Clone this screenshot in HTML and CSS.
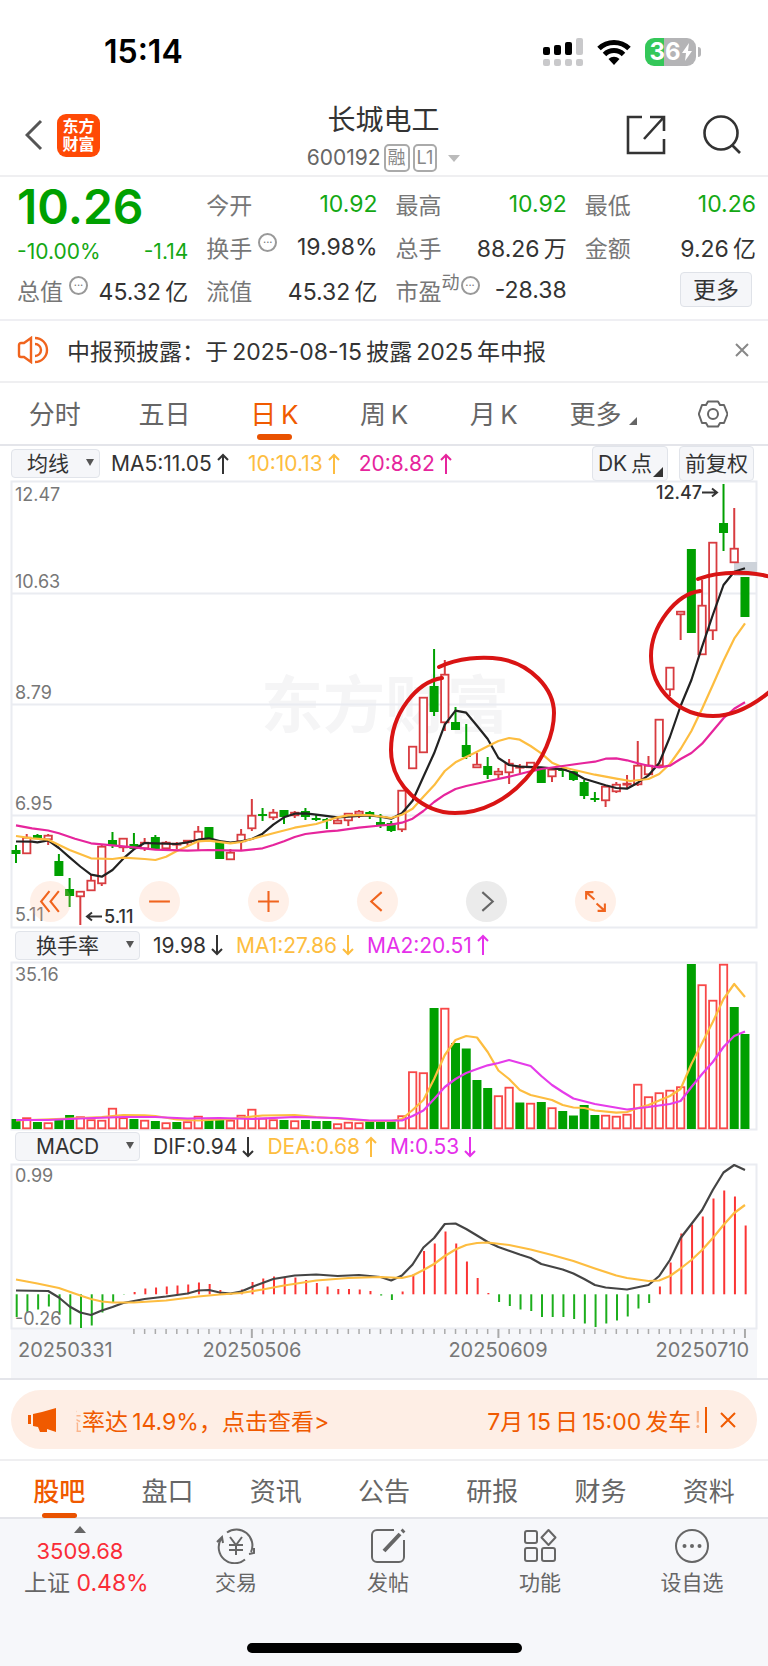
FILE: index.html
```html
<!DOCTYPE html>
<html lang="zh-CN">
<head>
<meta charset="utf-8">
<meta name="viewport" content="width=device-width, initial-scale=1">
<title>长城电工 600192</title>
<link rel="stylesheet" href="styles.css">
</head>
<body>
<div class="page">
  <div class="status">
    <time class="status-time">15:14</time>
    <div class="status-icons">
      <svg width="40" height="28" viewBox="0 0 40 28" aria-hidden="true">
        <g fill="#000"><rect x="0" y="9" width="7" height="8" rx="2"/><rect x="11" y="7" width="7" height="10" rx="2"/><rect x="22" y="4" width="7" height="13" rx="2"/></g>
        <g fill="#c9c9cb"><rect x="33" y="0" width="7" height="17" rx="2"/><rect x="0" y="21" width="7" height="7" rx="2"/><rect x="11" y="21" width="7" height="7" rx="2"/><rect x="22" y="21" width="7" height="7" rx="2"/><rect x="33" y="21" width="7" height="7" rx="2"/></g>
      </svg>
      <svg width="34" height="26" viewBox="0 0 34 26" aria-hidden="true">
        <g fill="none" stroke="#000" stroke-width="5"><path d="M2 9.500a21.500 21.500 0 0 1 30 0"/><path d="M7.500 15.500a13.500 13.500 0 0 1 19 0"/></g>
        <path d="M11.500 20a8 8 0 0 1 11 0L17 26z"/>
      </svg>
      <span class="battery"><b>36</b><svg width="10" height="18" viewBox="0 0 10 18" aria-hidden="true"><path d="M7 0L0 10h4L3 18l7-10H6z" fill="#fff"/></svg></span>
    </div>
  </div>

  <header class="header">
    <div class="header-side">
      <button class="plain" aria-label="返回"><svg width="18" height="32" viewBox="0 0 18 32"><path d="M16 2L2 16l14 14" fill="none" stroke="#555" stroke-width="3"/></svg></button>
      <a class="logo" href="#">东方<br>财富</a>
    </div>
    <div class="header-title">
      <h1>长城电工</h1>
      <div class="code">600192 <span class="tag">融</span><span class="tag">L1</span><i class="caret"></i></div>
    </div>
    <div class="header-side header-right">
      <button class="plain" aria-label="分享"><svg width="40" height="40" viewBox="0 0 40 40"><path d="M16 2H2v36h36V24M24 2h14v14M38 2L18 24" fill="none" stroke="#333" stroke-width="2.600"/></svg></button>
      <button class="plain" aria-label="搜索"><svg width="40" height="40" viewBox="0 0 40 40"><circle cx="19" cy="18" r="16.500" fill="none" stroke="#333" stroke-width="2.600"/><path d="M30 30l8 8" stroke="#333" stroke-width="2.600"/></svg></button>
    </div>
  </header>

  <section class="quote">
    <div class="price">10.26</div>
    <div class="cell"><span>今开</span><b class="down">10.92</b></div>
    <div class="cell"><span>最高</span><b class="down">10.92</b></div>
    <div class="cell"><span>最低</span><b class="down">10.26</b></div>
    <div class="cell change"><b class="down">-10.00%</b><b class="down">-1.14</b></div>
    <div class="cell"><span>换手<i class="info">···</i></span><b>19.98%</b></div>
    <div class="cell"><span>总手</span><b>88.26&#8201;万</b></div>
    <div class="cell"><span>金额</span><b>9.26&#8201;亿</b></div>
    <div class="cell"><span>总值<i class="info">···</i></span><b>45.32&#8201;亿</b></div>
    <div class="cell"><span>流值</span><b>45.32&#8201;亿</b></div>
    <div class="cell"><span>市盈<sup>动</sup><i class="info tight">···</i></span><b>-28.38</b></div>
    <div class="cell cell-end"><button class="more">更多</button></div>
  </section>

  <section class="notice">
    <svg width="32" height="28" viewBox="0 0 32 28" aria-hidden="true"><g fill="none" stroke="#f0641e" stroke-width="2.400"><path d="M14 2L7 7H4a2 2 0 0 0-2 2v10a2 2 0 0 0 2 2h3l7 5z"/><path d="M18 8a6 6 0 0 1 0 12M18 2a12 12 0 0 1 0 24"/></g></svg>
    <p>中报预披露：于&#8201;2025-08-15&#8201;披露&#8201;2025&#8201;年中报</p>
    <button class="plain" aria-label="关闭"><svg width="14" height="14" viewBox="0 0 14 14"><path d="M1 1l12 12M13 1L1 13" stroke="#888" stroke-width="2"/></svg></button>
  </section>

  <nav class="tabs periods">
    <a href="#">分时</a><a href="#">五日</a><a href="#" class="active">日&#8201;K</a><a href="#">周&#8201;K</a><a href="#">月&#8201;K</a><a href="#" class="with-corner">更多<i class="corner"></i></a>
    <button class="plain" aria-label="设置"><svg width="30" height="30" viewBox="0 0 30 30"><g fill="none" stroke="#666" stroke-width="2"><path d="M10 2.500h10l2 3.500h4l3.500 9-3.500 9h-4l-2 3.500H10L8 24H4L.8 15 4 6h4z" stroke-linejoin="round"/><circle cx="15" cy="15" r="5"/></g></svg></button>
  </nav>

  <main class="charts">
    <div class="legend legend-ma">
      <label class="pick"><select aria-label="主图指标"><option>均线</option></select><i class="caret dark"></i></label>
      <span class="k">MA5:11.05<svg class="arr"><use href="#up"/></svg></span>
      <span class="y">10:10.13<svg class="arr"><use href="#up"/></svg></span>
      <span class="p">20:8.82<svg class="arr"><use href="#up"/></svg></span>
      <span class="legend-tools"><button class="tool">DK&#8201;点<i class="corner"></i></button><button class="tool">前复权</button></span>
    </div>

    <div class="plot">
      <svg class="chart" viewBox="11 481 746 447" role="img" aria-label="日K线">
        <text class="watermark" x="261" y="728">东方财富</text>
        <path class="grid" d="M11.500 481.500h745v446h-745zM12 593.500h745M12 704.500h745M12 815.500h745"/>
        <rect x="734" y="562" width="23" height="14" fill="#ced3da"/>
        <g id="candles"></g>
        <g class="axis">
          <text x="15" y="501">12.47</text><text x="15" y="588">10.63</text><text x="15" y="699">8.79</text><text x="15" y="810">6.95</text><text x="15" y="921">5.11</text>
        </g>
        <g class="mark">
          <text x="656" y="499">12.47</text><path d="M702 492.500h15m-5-4l5 4-5 4"/>
          <text x="104" y="923">5.11</text><path d="M102 916.500H87m5-4l-5 4 5 4"/>
        </g>
        <g class="ink">
          <path d="M439 667C458 658 482 656 501 659C530 664 554 688 554 713C554 756 511 813 455 813C424 813 391 786 391 750C391 713 417 682 442 678"/>
          <path d="M698 579C713 573 732 572 748 573C800 577 822 612 806 645C795 676 750 716 713 716C680 716 651 690 651 656C651 626 676 594 700 591"/>
        </g>
      </svg>
      <div class="controls">
        <button aria-label="最左"><svg viewBox="0 0 24 24"><path d="M11 2l-8 10 8 10M20 2l-8 10 8 10"/></svg></button>
        <button aria-label="缩小"><svg viewBox="0 0 24 24"><path d="M2 12h20"/></svg></button>
        <button aria-label="放大"><svg viewBox="0 0 24 24"><path d="M2 12h20M12 2v20"/></svg></button>
        <button aria-label="左移"><svg viewBox="0 0 24 24"><path d="M16 3l-10 9 10 9"/></svg></button>
        <button aria-label="右移" class="off"><svg viewBox="0 0 24 24"><path d="M8 3l10 9-10 9"/></svg></button>
        <button aria-label="全屏"><svg viewBox="0 0 24 24"><path d="M3 10V3h7M3 3l8 7M21 14v7h-7M21 21l-8-7"/></svg></button>
      </div>
    </div>

    <div class="legend legend-sub">
      <label class="pick wide"><select aria-label="副图指标一"><option>换手率</option></select><i class="caret dark"></i></label>
      <span class="k">19.98<svg class="arr"><use href="#dn"/></svg></span>
      <span class="y">MA1:27.86<svg class="arr"><use href="#dn"/></svg></span>
      <span class="m">MA2:20.51<svg class="arr"><use href="#up"/></svg></span>
    </div>
    <svg class="chart" viewBox="11 962 746 168" role="img" aria-label="换手率">
      <path class="grid" d="M11.500 962.500h745v167h-745z"/>
      <g id="volume"></g>
      <text class="axis" x="15" y="981">35.16</text>
    </svg>

    <div class="legend legend-sub">
      <label class="pick wide"><select aria-label="副图指标二"><option>MACD</option></select><i class="caret dark"></i></label>
      <span class="k">DIF:0.94<svg class="arr"><use href="#dn"/></svg></span>
      <span class="y">DEA:0.68<svg class="arr"><use href="#up"/></svg></span>
      <span class="m">M:0.53<svg class="arr"><use href="#dn"/></svg></span>
    </div>
    <svg class="chart" viewBox="11 1163 746 215" role="img" aria-label="MACD">
      <rect x="11" y="1329" width="746" height="49" fill="#f6f7fa"/>
      <path class="grid" d="M11.500 1164.500h745v164h-745z"/>
      <g id="macd"></g>
      <g class="axis"><text x="15" y="1182">0.99</text><text x="15" y="1325">-0.26</text></g>
      <g class="dates"><text x="18" y="1357">20250331</text><text x="252" y="1357" text-anchor="middle">20250506</text><text x="498" y="1357" text-anchor="middle">20250609</text><text x="749" y="1357" text-anchor="end">20250710</text></g>
    </svg>
  </main>

  <aside class="promo-wrap">
    <div class="promo">
      <svg width="28" height="24" viewBox="0 0 28 24" aria-hidden="true"><path d="M0 7h3v9H0zM5 6l9-2 14-4v24l-9-3v3h-7l-2-5-5-1z" fill="#f05a00"/></svg>
      <span class="fade-in">益</span><a href="#" class="promo-text">率达&#8201;14.9%，点击查看&gt;</a>
      <span>7月&#8201;15&#8201;日&#8201;15:00&#8201;发车</span><span class="fade-out">!</span>
      <i class="bar"></i>
      <button class="plain" aria-label="关闭"><svg width="16" height="16" viewBox="0 0 16 16"><path d="M1 1l14 14M15 1L1 15" stroke="#f05a00" stroke-width="2"/></svg></button>
    </div>
  </aside>

  <nav class="tabs sections">
    <a href="#" class="active">股吧</a><a href="#">盘口</a><a href="#">资讯</a><a href="#">公告</a><a href="#">研报</a><a href="#">财务</a><a href="#">资料</a>
  </nav>

  <footer class="dock">
    <a href="#" class="index"><i class="caret up"></i><b>3509.68</b><span>上证 <b>0.48%</b></span></a>
    <a href="#"><svg width="40" height="36" viewBox="0 0 40 36"><g><path d="M11 4.500A16 16 0 0 1 35 24M29 31.500A16 16 0 0 1 5 11M1 14l5-5 1 6M33 26l5-1v-5"/><path d="M14 9l6 8 6-8M13 17h14M13 22h14M20 17v10"/></g></svg>交易</a>
    <a href="#"><svg width="36" height="36" viewBox="0 0 36 36"><g><path d="M24 2H7a5 5 0 0 0-5 5v22a5 5 0 0 0 5 5h22a5 5 0 0 0 5-5V12"/><path d="M14 23L30 6M32 4l2-2" stroke-width="4"/></g></svg>发帖</a>
    <a href="#"><svg width="34" height="36" viewBox="0 0 34 36"><g><rect x="2" y="3" width="12" height="12" rx="2"/><rect x="2" y="20" width="12" height="13" rx="2"/><rect x="19" y="20" width="13" height="13" rx="2"/><path d="M25.500 2l7 7.500-7 7.500-7-7.500z" stroke-linejoin="round"/></g></svg>功能</a>
    <a href="#"><svg width="36" height="36" viewBox="0 0 36 36"><g><circle cx="18" cy="18" r="16"/></g><g class="dots"><circle cx="10.500" cy="18" r="2"/><circle cx="18" cy="18" r="2"/><circle cx="25.500" cy="18" r="2"/></g></svg>设自选</a>
    <i class="home"></i>
  </footer>
</div>

<svg class="defs" aria-hidden="true">
  <symbol id="up" viewBox="0 0 12 22"><path d="M6 21V2M1 7l5-5 5 5"/></symbol>
  <symbol id="dn" viewBox="0 0 12 22"><path d="M6 1v19M1 15l5 5 5-5"/></symbol>
</svg>
<script src="charts.js"></script>
</body>
</html>
```
FILE: styles.css
```css
* { box-sizing: border-box; }
body { margin: 0; background: #fff; color: #333; font-family: "Inter", "Noto Sans CJK SC", sans-serif; font-size: 22px; }
.page { overflow: hidden; }
a { color: inherit; text-decoration: none; }
b, i { font-weight: 400; font-style: normal; }
h1, p { margin: 0; }
button, select { font: inherit; color: inherit; margin: 0; }
svg { display: block; }
.plain { padding: 0; border: 0; background: none; }
.defs { width: 0; height: 0; position: absolute; }

.status { display: flex; justify-content: space-between; align-items: center; height: 103px; padding: 0 67px 0 104px; }
.status-time { font-size: 32px; font-weight: 600; color: #000; }
.status-icons { display: flex; align-items: center; gap: 14px; }
.battery { position: relative; display: flex; align-items: center; justify-content: center; gap: 1px; width: 51px; height: 28px; border-radius: 9px; background: linear-gradient(90deg, #34c759 37%, #b4b4b6 37%); margin-right: 5px; }
.battery b { color: #fff; font-size: 24px; font-weight: 700; line-height: 28px; }
.battery::after { content: ""; position: absolute; right: -5px; top: 9px; width: 3px; height: 10px; border-radius: 0 3px 3px 0; background: #b4b4b6; }

.header { display: grid; grid-template-columns: 1fr auto 1fr; height: 74px; padding: 0 26px 0 25px; border-bottom: 2px solid #efeff1; }
.header-side { display: flex; align-items: center; gap: 14px; padding-bottom: 10px; padding-top: 2px; }
.header-right { justify-content: flex-end; gap: 36px; }
.logo { width: 43px; height: 43px; border-radius: 9px; background: #ff4a06; color: #fff; font-size: 16px; line-height: 18px; font-weight: 700; text-align: center; padding-top: 3px; }
.header-title { text-align: center; }
.header-title h1 { font-size: 28px; line-height: 34px; font-weight: 400; }
.code { display: flex; align-items: center; justify-content: center; gap: 3px; font-size: 21px; line-height: 30px; padding-top: 6px; color: #666; }
.tag { border: 2px solid #aaa; border-radius: 5px; font-size: 18px; line-height: 24px; padding: 0 2px; color: #888; }
.caret { width: 0; height: 0; border: 6px solid transparent; border-top: 7px solid #bbb; border-bottom: 0; }
.code .caret { margin-left: 8px; }

.quote { display: grid; grid-template-columns: repeat(4, 1fr); grid-auto-rows: 43px; column-gap: 18px; padding: 5px 12px 8px 17px; border-bottom: 2px solid #efeff3; }
.cell { display: flex; justify-content: space-between; align-items: center; font-size: 23px; white-space: nowrap; }
.cell span { color: #777; display: flex; align-items: center; }
.cell .down, .down { color: #14a814; }
.price { color: #00a000; font-size: 48px; line-height: 50px; font-weight: 600; }
.change { padding-top: 10px; font-size: 21px; }
.cell-end { justify-content: flex-end; padding-right: 4px; }
.info { width: 19px; height: 19px; border: 2px solid #999; border-radius: 50%; font-size: 11px; line-height: 14px; text-align: center; color: #777; margin: 0 0 9px 6px; }
.info.tight { margin-left: 1px; }
.cell sup { font-size: 18px; line-height: 18px; margin-bottom: 14px; }
.more { width: 72px; height: 35px; padding: 0; border: 1px solid #dfe2e8; border-radius: 4px; background: #f5f6f9; line-height: 30px; }

.notice { display: flex; align-items: center; height: 62px; padding: 0 19px 2px 17px; border-bottom: 2px solid #efeff1; gap: 18px; }
.notice p { flex: 1; font-size: 23px; }

.tabs { display: flex; align-items: center; border-bottom: 2px solid #e4e5ea; font-size: 26px; color: #666; }
.tabs > * { flex: 1; display: flex; justify-content: center; align-items: center; position: relative; height: 100%; }
.tabs .active { color: #f05a00; }
.tabs .active::after { content: ""; position: absolute; bottom: 4px; left: 50%; width: 35px; height: 6px; margin-left: -17px; border-radius: 3px; background: #e95200; }
.periods { height: 63px; }
.periods a { padding-bottom: 3px; }
.corner { width: 0; height: 0; border-bottom: 8px solid #666; border-left: 8px solid transparent; }
.with-corner .corner { margin: 18px 0 0 8px; }

.charts { margin: 0 11px; }
.legend { display: flex; align-items: center; color: #333; font-size: 21px; }
.legend span { display: flex; align-items: center; white-space: nowrap; }
.legend-ma { height: 35px; gap: 19px; }
.legend-sub { height: 34px; gap: 13px; padding-left: 4px; }
.chart + .legend-sub { height: 33px; }
.legend .legend-tools { margin-left: auto; margin-right: 3px; gap: 11px; align-self: stretch; align-items: stretch; }
.pick { position: relative; width: 89px; height: 29px; }
.pick.wide { width: 125px; }
.pick select { appearance: none; width: 100%; height: 100%; padding: 0 0 0 15px; border: 1px solid #e1e4ea; border-radius: 4px; background: #f5f6f9; color: #333; line-height: 25px; }
.pick.wide select { padding-left: 20px; }
.legend-ma .pick { margin-right: -8px; }
.caret.dark { position: absolute; right: 6px; top: 10px; border-width: 7px 4px 0; border-top-color: #555; }
.arr { width: 12px; height: 22px; margin-left: 5px; }
.defs path { fill: none; stroke: currentColor; stroke-width: 2; }
.k { color: #333; }
.y { color: #fdbd40; }
.p { color: #e6259c; }
.m { color: #e530ea; }
.tool { position: relative; padding: 0 5px; border: 1px solid #e1e4ea; border-radius: 4px; background: #f5f6f9; line-height: 28px; }
.tool:first-child { padding-right: 15px; }
.tool .corner { position: absolute; right: 4px; bottom: 3px; border-bottom: 10px solid #333; border-left: 10px solid transparent; }

.plot { position: relative; }
.chart { width: 100%; height: auto; overflow: visible; }
.grid { fill: none; stroke: #eaecf1; stroke-width: 2; }
.chart text { font-family: "Inter", "Noto Sans CJK SC", sans-serif; }
.axis { font-size: 18px; fill: #777; }
.dates { font-size: 20px; fill: #777; }
.watermark { font-size: 62px; font-weight: 700; fill: #f5f5f6; }
.mark { font-size: 18px; font-weight: 500; fill: #333; }
.mark path { fill: none; stroke: #333; stroke-width: 2; }
.ink { fill: none; stroke: #d91414; stroke-width: 4; stroke-linecap: round; }
.line { fill: none; stroke-width: 2.2; stroke-linejoin: round; }
.controls { position: absolute; left: 19px; right: 0; bottom: 6px; display: flex; gap: 68px; }
.controls button { width: 41px; height: 41px; padding: 8px; border: 0; border-radius: 50%; background: rgba(255, 180, 140, .2); }
.controls svg { fill: none; stroke: #f0641e; stroke-width: 2; }
.controls .off { background: #ebebeb; }
.controls .off svg { stroke: #666; }

.promo-wrap { padding: 10px 11px; border-top: 2px solid #e4e5ea; border-bottom: 2px solid #efeff1; }
.promo { display: flex; align-items: center; height: 59px; padding: 0 21px 0 17px; border-radius: 30px; background: #feeee5; color: #f05a00; font-size: 23px; white-space: nowrap; }
.promo-text { flex: 1; }
.fade-in { margin-left: 3px; color: transparent; background: linear-gradient(90deg, transparent 72%, #fbb58c 80%); -webkit-background-clip: text; background-clip: text; }
.fade-out { opacity: .4; margin-left: 3px; }
.bar { width: 2px; height: 26px; background: #f05a00; margin: 0 13px 0 4px; }

.sections { height: 58px; padding: 0 5px; }
.sections .active { font-weight: 500; }
.sections .active::after { bottom: -1px; height: 5px; }

.dock { display: grid; grid-template-columns: 160px repeat(4, 1fr); grid-template-rows: 124px 24px; background: #f6f7fa; color: #666; font-size: 21px; }
.dock a { display: flex; flex-direction: column; align-items: center; padding-top: 9px; gap: 5px; line-height: 27px; }
.dock svg g { fill: none; stroke: #666; stroke-width: 2; }
.dock svg .dots { fill: #666; stroke: none; }
.dock .index { padding-top: 7px; font-size: 22px; }
.dock .index b { color: #fa2d37; }
.dock .index span { font-size: 23px; width: 100%; padding-left: 24px; white-space: nowrap; }
.caret.up { border-top: 0; border-bottom: 7px solid #666; }
.home { grid-column: 1 / -1; justify-self: center; width: 275px; height: 10px; border-radius: 5px; background: #000; }
```
FILE: charts.js
```js
const RED = '#d83c40', BAR_RED = '#f84848', GREEN = '#00a000';
const x = i => 16 + 10.72 * i;

// One row per trading day: direction, high, low, body top, body bottom
const candles = `g 845 863 850 854|r 834 854 837 854|g 834 838 835 838|r 834 845 835 840|g 854 876 861 876|g 878 907 889 896|r 891 925 891 897|r 875 891 880 891|r 845 886 846 884|g 832 848 840 846|r 838 852 838 848|g 833 849 844 849|r 838 851 842 849|g 835 849 837 849|r 841 849 842 849|r 842 849 843 845|r 840 847 840 843|r 826 850 831 841|g 827 840 827 840|g 840 859 841 859|r 849 860 852 860|r 829 850 834 842|r 799 831 815 829|g 808 821 814 816|r 809 820 812 818|g 810 824 810 817|r 811 818 812 816|g 808 820 811 817|g 815 821 818 820|g 818 829 819 821|r 817 824 820 824|r 813 826 813 821|r 810 818 811 815|g 811 819 812 815|g 814 828 822 826|g 821 832 823 831|r 790 832 790 830|r 746 769 746 769|r 697 753 697 753|g 649 716 686 712|r 660 731 674 723|g 707 730 722 730|g 724 759 745 757|r 753 768 764 768|g 757 779 766 775|r 768 778 771 775|r 759 784 763 773|r 764 773 766 768|r 762 768 762 768|g 767 783 767 783|r 768 782 769 777|g 768 777 768 771|g 771 781 771 780|g 780 799 782 796|g 792 802 798 800|r 786 807 786 801|r 782 793 784 792|r 775 789 783 785|r 741 786 765 785|r 756 775 765 775|r 719 767 719 766|r 667 696 667 690|r 611 640 611 615|g 549 633 549 633|r 580 655 605 655|r 542 640 542 631|g 484 551 523 533|r 508 563 548 563|g 577 617 577 617`
  .split('|').map(r => r.split(' '));

const turnover = [1119,1117.5,1122,1122.5,1120,1115,1116.5,1119.5,1120,1108,1117.5,1119,1120,1121,1122.5,1122,1121.5,1116,1120,1119,1120,1115,1109,1118,1119.5,1120,1120.5,1120,1121,1121,1123.5,1122,1122.5,1121.5,1122,1121.5,1115.5,1071.5,1072.5,1008,1008,1043,1048.5,1080,1088,1095.5,1087,1102.5,1103,1102,1107.5,1111,1115.5,1105,1115,1115,1116,1114,1084,1096.5,1092.5,1090,1086.5,964,984.5,1000,964,1007,1034];

// Days whose turnover bar is a falling one
const fallingDays = new Set([0,2,4,5,11,13,15,18,19,25,27,28,29,33,34,35,39,41,42,43,44,47,49,51,52,53,54,63,67,68]);

const histogram = [1317,1312.5,1309.5,1306.5,1314.5,1324.5,1328,1325.5,1312.5,1302,1294.6,1292,1288.5,1287.5,1286.5,1285.5,1284.5,1282.5,1284,1290,1293,1289.5,1282,1278.5,1276.5,1277,1277.5,1280,1283,1286.5,1289,1289,1289.5,1291,1295.5,1300,1291.5,1274.5,1251,1243.5,1231.5,1243.5,1261.5,1278,1293,1302,1306,1309.5,1311,1317,1317,1317,1319,1323.5,1327,1323.5,1320.5,1316.5,1308.5,1303,1286.5,1262.5,1233.5,1224.5,1216.5,1198.5,1190.5,1196.5,1225.5];

// Lines are "day:y" pairs; days left out are joined straight
function line(data, color) {
  const pts = data.split(' ').map(p => p.split(':')).map(([i, y]) => x(+i).toFixed(1) + ',' + y).join(' ');
  return `<polyline class="line" points="${pts}" stroke="${color}"/>`;
}

let out = '';
candles.forEach(([d, hi, lo, top, bot], i) => {
  const c = d === 'g' ? GREEN : RED, cx = x(i);
  const h = Math.max(bot - top, 2);
  out += `<path d="M${cx} ${hi}V${top}M${cx} ${bot}V${lo}" stroke="${c}" stroke-width="2"/>`;
  out += d === 'g'
    ? `<rect x="${cx - 4.5}" y="${top}" width="9" height="${h}" fill="${c}"/>`
    : `<rect x="${cx - 3.7}" y="${+top + .7}" width="7.4" height="${Math.max(h - 1.4, 1)}" fill="#fff" stroke="${c}" stroke-width="1.8"/>`;
});
out += line('0:841.5 1.5:841.7 2:842.3 3:840.3 4:848 5:857.3 6:866.5 7:874.7 8:876.7 9:870 10:858.7 11:849.3 12:843 13:843.3 15:844 16:842.3 17:839.7 18:838.3 19:841 20:842.7 21:841.3 22:839 23:833.7 24:824.7 25:817.3 26:813.7 27:813.3 28:814.7 30:817.3 32:816 33:815.5 34:816.7 35:818.7 36:813.3 37:800.7 38:776.7 39:753.3 40:724.7 41:710.7 42:712.7 43:725.7 44:739 45:758 46:765 47:766.7 49:767.3 51:769.3 52:772.7 53:778.7 54:782 55:785.3 56:788 57:788.7 58:782.7 59:775.3 60:763 61:737 62:706 63:680 64:646.7 65:615 66:585 67:571.7 68:568.3', '#222');
out += line('0:836 1.5:838.3 3:839.7 5:850 7:858.3 9:859 10:857.7 12:859 13:860 14:856.7 15:851 16:846.3 17:841.3 18:840.7 20:843.3 21:842 22:839 24:833.3 26:827.7 28:824 30:817.3 31:815.3 33:815 35:818 36:814.7 37:808.7 38:796.7 39:785.3 40:771 41:762.3 42:757 43:751.7 44:746.3 45:741 46:738 47:739.7 48:746 49:753.3 50:762.7 51:767.3 52:769.7 54:774.7 56:778.7 57.3:781 59:779 60:774 61:764 62:749 63:731 64:708.7 65:685 66:660.7 67:638.7 68:623.3', '#fdbd40');
out += line('0:825.3 1.5:828.3 3:830.5 4:833.3 5.5:838.7 7:843.3 9:845.3 11:847.3 13:849.7 16:850.7 18:850 21:850.7 23:848.3 24:845 25:841.3 26:837 27:834 29:831.3 30:830.7 32:827.7 34:825.5 35:824.7 36:822.7 37:818.7 38:811 39:802 40:794.7 41:789 42:786 44:781.3 46:776.7 48:771.3 49:769 51:766 53:763 54:761.7 55:758.7 56:758.3 57:760.3 58:763.3 59:765.7 60:767.3 61:765.7 62:759 63:753 64:743.7 65:731 66:718.3 67:708.7 68:702.3', '#e6259c');
document.getElementById('candles').innerHTML = out;

out = '';
turnover.forEach((y, i) => {
  out += fallingDays.has(i)
    ? `<rect x="${x(i) - 4.5}" y="${y}" width="9" height="${1129 - y}" fill="${GREEN}"/>`
    : `<rect x="${x(i) - 3.7}" y="${y + .7}" width="7.4" height="${1127.6 - y}" fill="#fff" stroke="${BAR_RED}" stroke-width="1.8"/>`;
});
out += line('0:1120.5 5:1118.5 8:1117 10:1115 12:1115.3 13:1116 15:1119.5 17:1120.5 20:1119 23:1115.5 26:1115 28:1117 30:1118.5 33:1121 35:1121 36:1119 37:1110 38:1100 39:1079 40:1055 41:1040 42:1036 43:1037.5 44:1052 45:1070.5 46:1079 47:1090 48:1095 50:1100 51:1105 52:1107.5 53:1108 54:1110.5 56:1112.7 57:1112 58:1108 59:1105 60:1100.5 61:1096 62:1089 63:1064 64:1043 65:1022 66:999 67:984 68:997', '#fdbd40');
out += line('0:1120 3:1120 6:1118.5 10:1117 13:1117 16:1118.5 19:1118 22:1119 26:1117 30:1118 33:1120.5 36:1120.5 37:1116 38:1110.5 39:1099 40:1087 41:1079 42:1073 43:1069 44:1065.3 45:1063 46:1060 47:1063 48:1066 49:1076 50:1085 51:1092 52:1098.5 54:1104 57:1109.5 59:1107 61:1104 62:1101 63:1087 64:1074 65:1062 66:1047 67:1036 68:1031.5', '#e53cea');
document.getElementById('volume').innerHTML = out;

out = '';
histogram.forEach((y, i) => {
  out += `<path d="M${x(i) + .7} 1294.3V${y}" stroke="${y > 1294.3 ? '#1cae1c' : '#fb3434'}" stroke-width="2"/>`;
});
for (let i = 11; i < 69; i++) {
  const major = i === 22 || i === 45 || i === 68;
  out += `<path d="M${x(i)} 1329v${major ? 9 : 5}" stroke="#aaa" stroke-width="${major ? 2 : 1.5}"/>`;
}
out += line('0:1290.5 3:1291 4:1297.5 5:1306.5 6:1312.5 7:1315 8:1310.5 9:1307 10:1303 11:1301 12:1299 14:1296.5 16:1293.5 17:1290.5 18:1290 19:1292.5 20:1293.5 21:1291.5 22:1287 24:1279 26:1275.5 28:1274.5 30:1276 32:1275 34:1277 35:1280.5 36:1275.5 37:1264.5 38:1247.5 39:1238 40:1224 41:1223.5 42:1229 43:1235.5 44:1242 45:1247 47:1254.5 48:1258 49:1264 51:1269.5 52:1273.5 53:1279 54:1285 55:1287.5 57:1289.5 59:1285 60:1276 61:1260 62:1238 63:1224 64:1210 65:1190 66:1172.5 67:1165 68:1170', '#444');
out += line('0:1279.5 2:1283.5 4:1288 6:1295.5 7:1299 8:1301.5 9:1302.5 11:1302.5 14:1300.5 17:1296.5 19:1294.5 21:1293 23:1289.5 25:1285.5 28:1280.5 31:1278 34:1277 36:1278 37:1275.5 38:1270 39:1264 40:1256 41:1249.5 42:1245 43:1243 44:1242.5 46:1245 48:1249.5 50:1255 52:1261 54:1268.5 56:1275.5 57:1278 59:1281 60:1280.5 61:1276 62:1268.5 63:1260 64:1250 65:1238 66:1225 67:1213 68:1205', '#fdbd40');
document.getElementById('macd').innerHTML = out;
```
